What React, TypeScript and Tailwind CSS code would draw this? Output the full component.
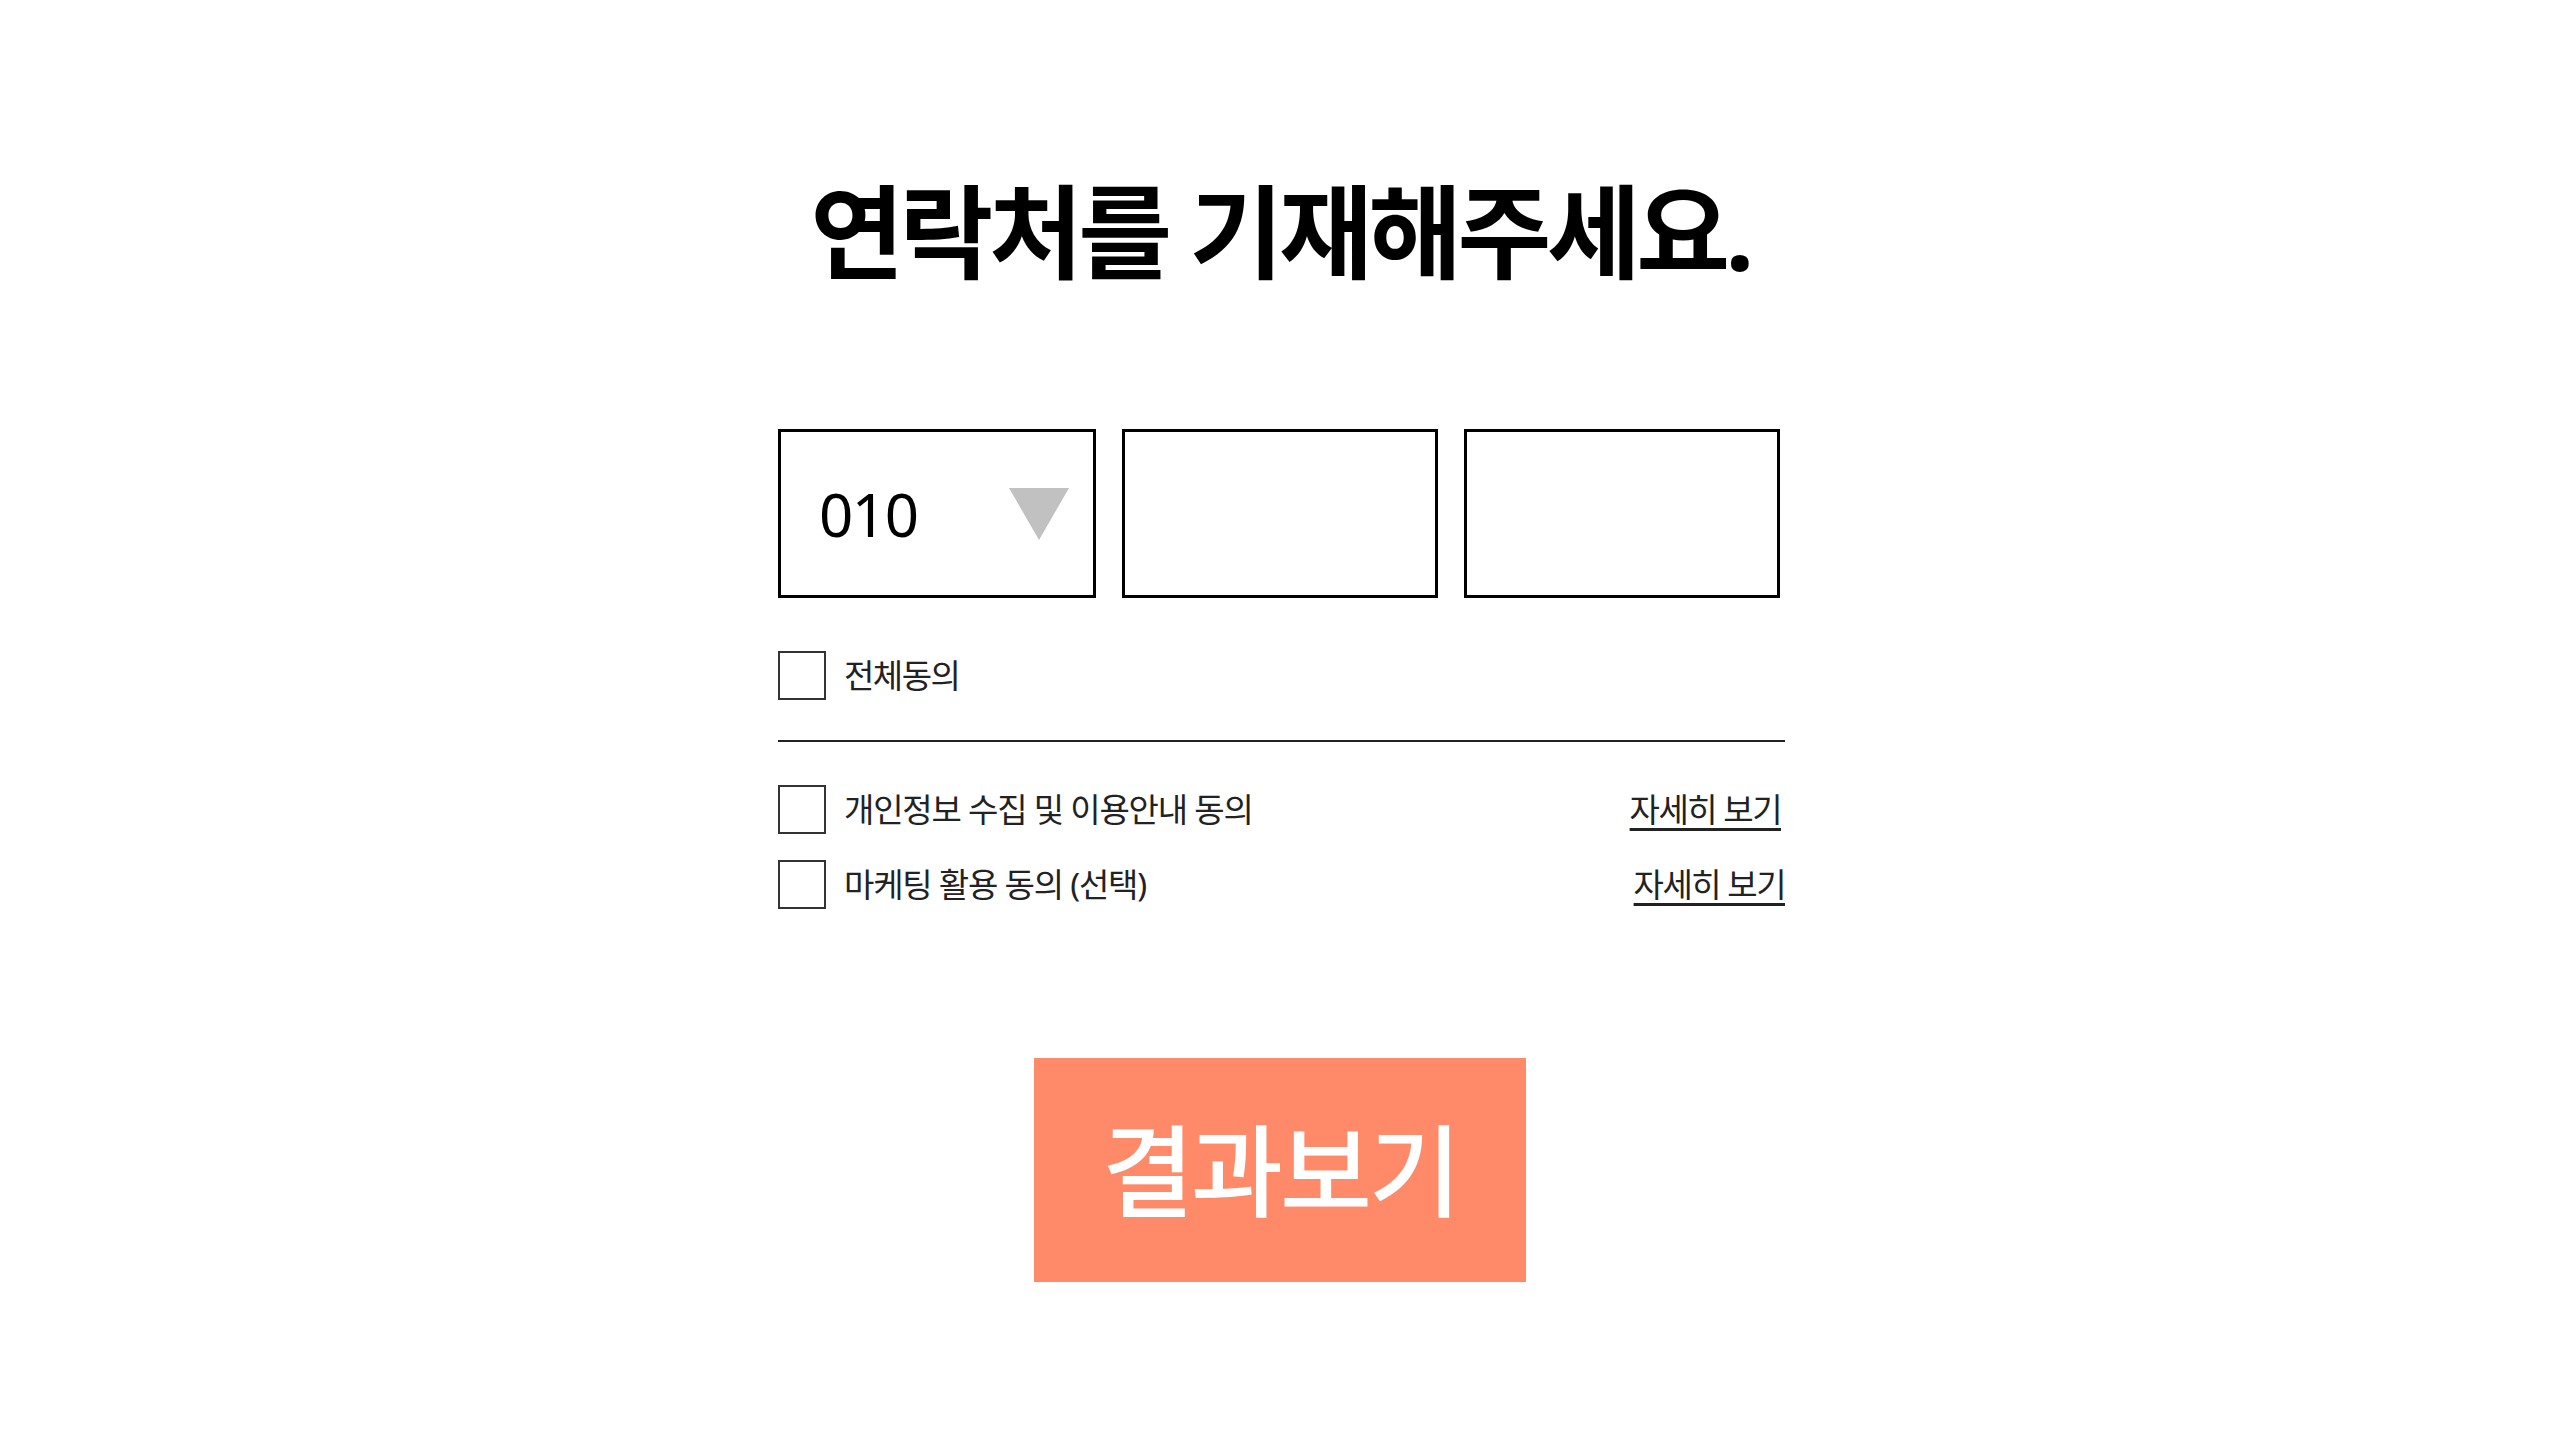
import { useState } from 'react';

const font = { fontFamily: '"Noto Sans", "Noto Sans CJK KR", sans-serif' };

function Check({ checked, onClick }: { checked: boolean; onClick: () => void }) {
  return (
    <button
      onClick={onClick}
      className="w-[48px] h-[49px] border-2 border-[#333] bg-white shrink-0 flex items-center justify-center"
    >
      {checked && <span className="text-[30px] leading-none text-[#333]">✓</span>}
    </button>
  );
}

export default function App() {
  const [all, setAll] = useState(false);
  const [privacy, setPrivacy] = useState(false);
  const [marketing, setMarketing] = useState(false);

  const toggleAll = () => {
    const next = !all;
    setAll(next);
    setPrivacy(next);
    setMarketing(next);
  };

  return (
    <div className="min-h-screen bg-white flex flex-col items-center pt-[181px]" style={font}>
      <h1 className="text-[102px] font-bold leading-none tracking-[-4.5px] text-black">
        연락처를 기재해주세요.
      </h1>

      <div className="w-[1007px] mt-[146px] ml-[3px]">
        {/* Phone inputs */}
        <div className="flex gap-[26px]">
          <div className="w-[318px] h-[169px] border-[3px] border-black flex items-center justify-between pl-[38px] pr-[24px]">
            <span className="text-[60px] text-black leading-none tracking-[-1.5px]">010</span>
            <svg width="60" height="52" viewBox="0 0 60 52">
              <polygon points="0,0 60,0 30,52" fill="#c1c1c1" />
            </svg>
          </div>
          <input className="w-[316px] h-[169px] border-[3px] border-black outline-none px-6 text-[60px]" />
          <input className="w-[316px] h-[169px] border-[3px] border-black outline-none px-6 text-[60px]" />
        </div>

        {/* Agree all */}
        <div className="flex items-center gap-[18px] mt-[53px]">
          <Check checked={all} onClick={toggleAll} />
          <span className="text-[33px] tracking-[-1.5px] text-[#222]">전체동의</span>
        </div>

        <div className="h-[2px] bg-[#222] mt-[39px]" />

        <div className="flex items-center justify-between mt-[43px]">
          <div className="flex items-center gap-[18px]">
            <Check checked={privacy} onClick={() => setPrivacy(!privacy)} />
            <span className="text-[33px] tracking-[-1.2px] text-[#222]">개인정보 수집 및 이용안내 동의</span>
          </div>
          <a className="text-[33px] tracking-[-1.5px] text-[#222] underline underline-offset-[6px] mr-[4px]">자세히 보기</a>
        </div>

        <div className="flex items-center justify-between mt-[26px]">
          <div className="flex items-center gap-[18px]">
            <Check checked={marketing} onClick={() => setMarketing(!marketing)} />
            <span className="text-[33px] tracking-[-1.2px] text-[#222]">마케팅 활용 동의 (선택)</span>
          </div>
          <a className="text-[33px] tracking-[-1.5px] text-[#222] underline underline-offset-[6px]">자세히 보기</a>
        </div>
      </div>

      <button className="w-[492px] h-[224px] bg-[#ff8a69] text-white text-[100px] font-medium tracking-[-3px] mt-[148px] leading-none">
        결과보기
      </button>
    </div>
  );
}
